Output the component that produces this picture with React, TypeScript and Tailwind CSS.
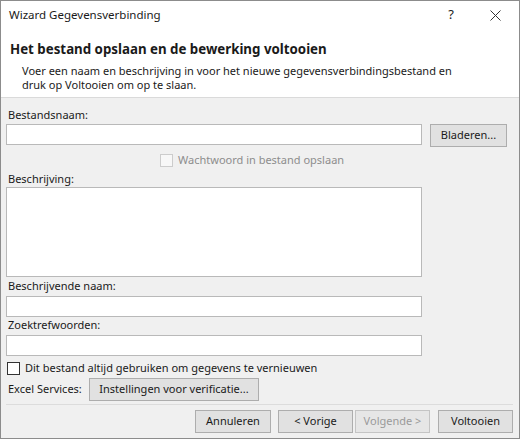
import React from 'react';

const font = "font-['Segoe_UI','Noto_Sans','Liberation_Sans',sans-serif]";

const Btn: React.FC<{ label: string; w: string; disabled?: boolean }> = ({ label, w, disabled }) => (
  <div
    className={`${w} h-[23px] flex items-center justify-center border text-[11px] ${
      disabled ? 'border-[#c4c4c4] text-[#9a9a9a] bg-[#e6e6e6]' : 'border-[#adadad] text-[#1a1a1a] bg-[#e1e1e1]'
    }`}
  >
    {label}
  </div>
);

const Box: React.FC<{ h: string }> = ({ h }) => (
  <div className={`w-[416px] ${h} bg-white border border-[#b9b9b9]`} />
);

const Label: React.FC<{ text: string; className?: string }> = ({ text, className = '' }) => (
  <div className={`h-[16px] leading-[16px] text-[11px] text-[#1a1a1a] ${className}`}>{text}</div>
);

export default function App() {
  return (
    <div className={`w-[520px] h-[439px] border border-[#8c8c8c] bg-[#f0f0f0] flex flex-col ${font} text-[#1a1a1a]`}>
      {/* Header */}
      <div className="h-[97px] shrink-0 bg-white border-b border-[#dadada] flex flex-col">
        <div className="h-[28px] flex items-center pl-[8px] pr-[18px] text-[11.5px]">
          <span className="flex-1">Wizard Gegevensverbinding</span>
          <span className="mr-[36px] text-[13px]">?</span>
          <svg width="11" height="11" viewBox="0 0 11 11" className="text-[#333]">
            <path d="M0.5 0.5 L10.5 10.5 M10.5 0.5 L0.5 10.5" stroke="currentColor" strokeWidth="1" />
          </svg>
        </div>
        <div className="mt-[11px] pl-[9px] h-[18px] leading-[18px] text-[13.3px] font-bold">
          Het bestand opslaan en de bewerking voltooien
        </div>
        <div className="mt-[6px] pl-[21px] text-[11px] leading-[14px]">
          Voer een naam en beschrijving in voor het nieuwe gegevensverbindingsbestand en
          <br />
          druk op Voltooien om op te slaan.
        </div>
      </div>

      {/* Body */}
      <div className="flex-1 px-[5px] flex flex-col">
        <Label text="Bestandsnaam:" className="mt-[9px] pl-[2px]" />
        <div className="mt-[1px] flex items-start">
          <Box h="h-[21px]" />
          <div className="ml-[8px]">
            <Btn label="Bladeren..." w="w-[77px]" />
          </div>
        </div>
        <div className="mt-[6px] h-[14px] flex items-center pl-[154px]">
          <div className="w-[13px] h-[13px] border border-[#cccccc] bg-[#f7f7f7]" />
          <span className="ml-[5px] text-[11px] text-[#8d8d8d]">Wachtwoord in bestand opslaan</span>
        </div>
        <Label text="Beschrijving:" className="mt-[4px] pl-[2px]" />
        <div>
          <Box h="h-[90px]" />
        </div>
        <Label text="Beschrijvende naam:" className="mt-[1px] pl-[2px]" />
        <div className="mt-[2px]">
          <Box h="h-[21px]" />
        </div>
        <Label text="Zoektrefwoorden:" className="pl-[2px]" />
        <div className="mt-[2px]">
          <Box h="h-[21px]" />
        </div>
        <div className="mt-[5px] h-[14px] flex items-center pl-[1px]">
          <div className="w-[13px] h-[13px] border border-[#333333] bg-white" />
          <span className="ml-[5px] text-[11px]">Dit bestand altijd gebruiken om gegevens te vernieuwen</span>
        </div>
        <div className="mt-[3px] flex items-center pl-[2px]">
          <span className="w-[81px] text-[11px]">Excel Services:</span>
          <Btn label="Instellingen voor verificatie..." w="w-[170px]" />
        </div>
        <div className="mt-[3px] mr-[1px] border-t border-[#dcdcdc]" />
        <div className="mt-[5px] flex items-center justify-end pr-[1px]">
          <Btn label="Annuleren" w="w-[76px]" />
          <div className="ml-[7px]">
            <Btn label="< Vorige" w="w-[75px]" />
          </div>
          <div className="ml-[2px]">
            <Btn label="Volgende >" w="w-[75px]" disabled />
          </div>
          <div className="ml-[8px]">
            <Btn label="Voltooien" w="w-[75px]" />
          </div>
        </div>
      </div>
    </div>
  );
}
